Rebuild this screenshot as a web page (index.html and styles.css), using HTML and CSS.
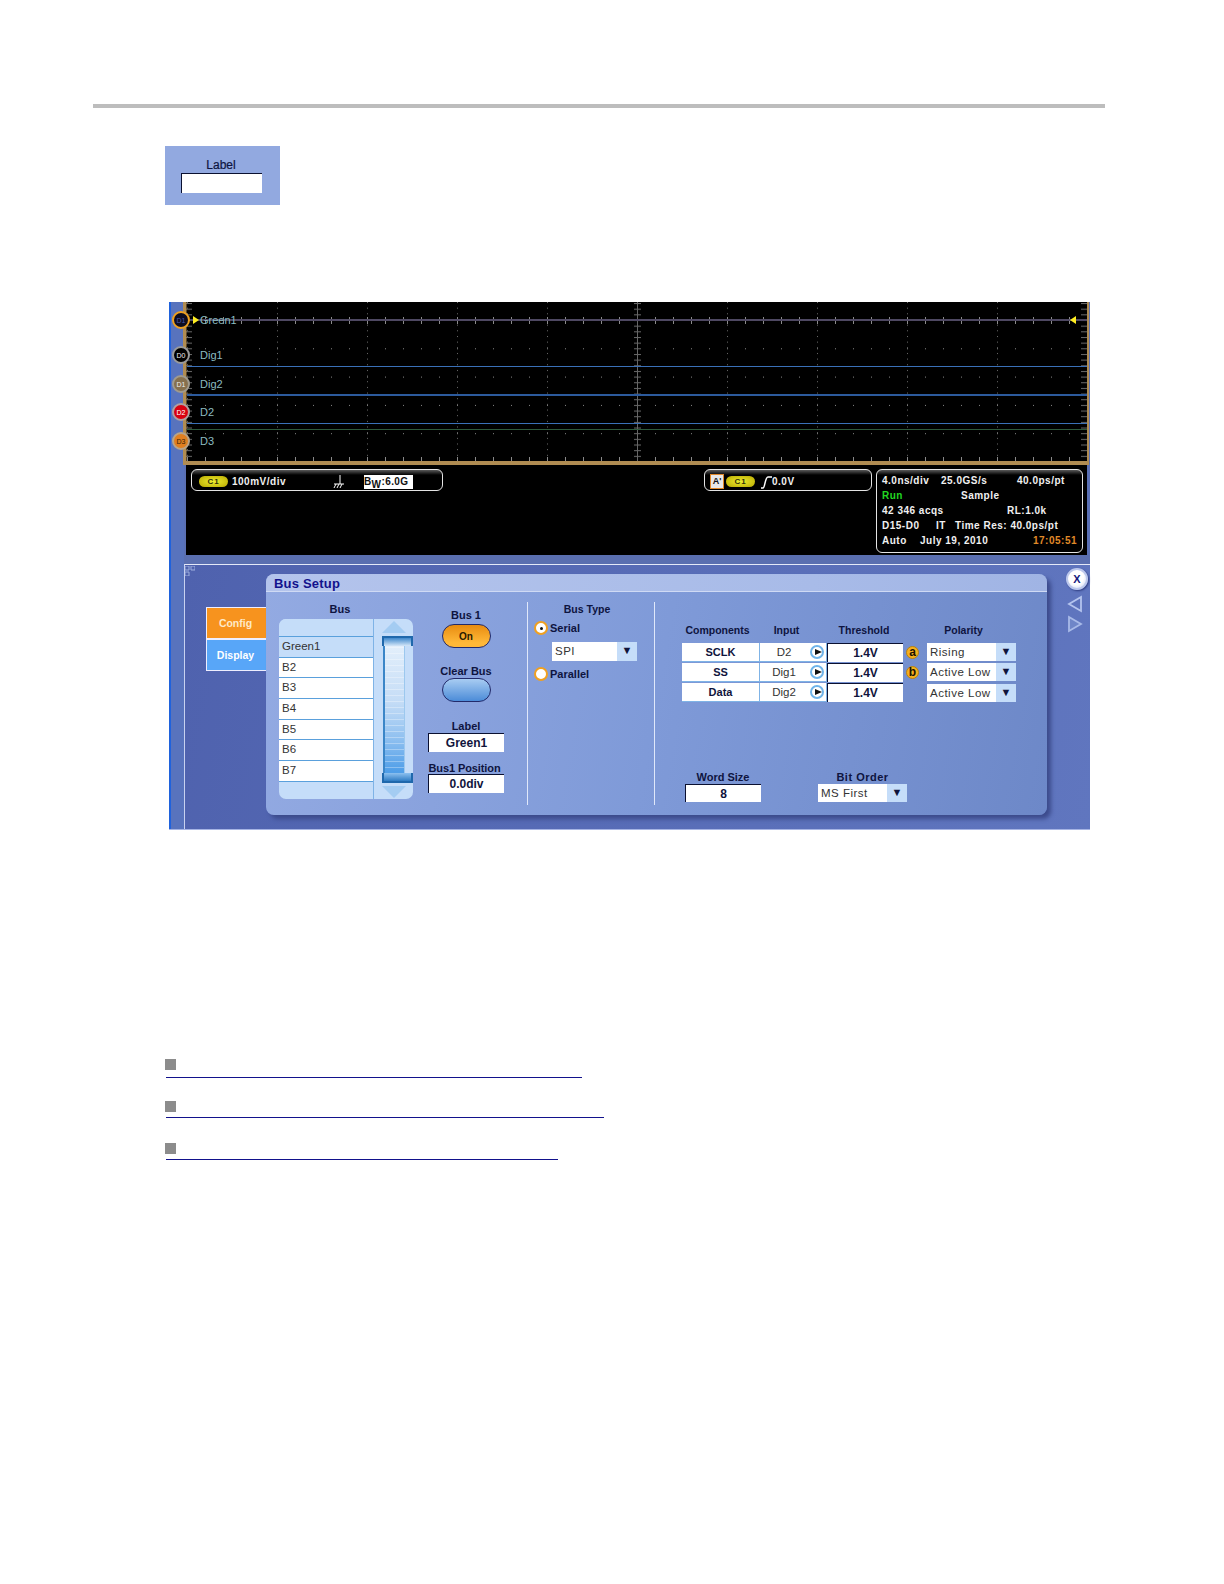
FILE: index.html
```html
<!DOCTYPE html>
<html lang="en">
<head>
<meta charset="utf-8">
<title>Bus Setup</title>
<link rel="stylesheet" href="styles.css">
</head>
<body>
<div class="rule"></div>

<div class="label-panel">
  <div class="cap">Label</div>
  <div class="entry label-entry"></div>
</div>

<div class="scope">
  <div class="edge"></div>
  <div class="main">
    <svg class="plot" width="907" height="163" viewBox="183 302 907 163">
      <defs>
        <pattern id="dots" x="187" y="320" width="18" height="28.3" patternUnits="userSpaceOnUse"><rect width="1" height="1" fill="#8a8a8a"/></pattern>
        <pattern id="vdots" x="187" y="302" width="90" height="5.66" patternUnits="userSpaceOnUse"><rect width="1" height="1" fill="#6e6e6e"/></pattern>
        <pattern id="ticks" x="187" y="0" width="18" height="10" patternUnits="userSpaceOnUse"><rect width="1" height="10" fill="#8a8a8a"/></pattern>
        <pattern id="lticks" x="0" y="320" width="10" height="5.66" patternUnits="userSpaceOnUse"><rect width="10" height="1" fill="#6a6a6a"/></pattern>
      </defs>
      <rect x="183" y="302" width="904" height="163" fill="#000"/>
      <rect x="187" y="320" width="900" height="141" fill="url(#dots)"/>
      <rect x="187" y="302" width="900" height="159" fill="url(#vdots)"/>
      <rect x="187" y="457" width="900" height="4" fill="url(#ticks)"/>
      <rect x="187" y="317" width="900" height="7" fill="url(#ticks)"/>
      <rect x="186" y="302" width="6" height="159" fill="url(#lticks)"/>
      <rect x="634" y="302" width="7" height="159" fill="url(#lticks)"/>
      <rect x="1081" y="302" width="6" height="159" fill="url(#lticks)"/>
      <rect x="637" y="302" width="1" height="159" fill="#666"/>
      <rect x="190" y="319" width="897" height="2" fill="#4e4862"/>
      <rect x="187" y="366" width="900" height="1" fill="#3a70b8"/>
      <rect x="187" y="394" width="900" height="2" fill="#2c5a9c"/>
      <rect x="187" y="423" width="900" height="1" fill="#3a70b8"/>
      <rect x="187" y="429" width="900" height="1" fill="#2e5a3c"/>
      <rect x="183" y="302" width="3.5" height="163" fill="#b08c52"/>
      <rect x="1087" y="302" width="2" height="163" fill="#b08c52"/>
      <rect x="183" y="461" width="906" height="4" fill="#b08c52"/>
      <polygon points="193,316 199,320 193,324" fill="#ffee22"/>
      <polygon points="1076,316 1070,320 1076,324" fill="#ffee22"/>
      <g class="trace-label">
        <text x="200" y="324">Green1</text>
        <text x="200" y="359">Dig1</text>
        <text x="200" y="388">Dig2</text>
        <text x="200" y="416">D2</text>
        <text x="200" y="445">D3</text>
      </g>
      <circle cx="181" cy="320" r="8" fill="#0c0c20" stroke="#eda020" stroke-width="2"/>
      <circle cx="181" cy="355" r="8" fill="#000" stroke="#9a9a9a" stroke-width="2"/>
      <circle cx="181" cy="384" r="8" fill="#86704e" stroke="#a09a8e" stroke-width="2"/>
      <circle cx="181" cy="412" r="8" fill="#d80010" stroke="#b0a0a0" stroke-width="2"/>
      <circle cx="181" cy="441" r="8" fill="#e07f20" stroke="#b8a488" stroke-width="2"/>
      <g class="chan">
        <text x="181" y="323" fill="#4a58a8">D1</text>
        <text x="181" y="358" fill="#eee">D0</text>
        <text x="181" y="387" fill="#eee">D1</text>
        <text x="181" y="415" fill="#fff">D2</text>
        <text x="181" y="444" fill="#33220a">D3</text>
      </g>
    </svg>

    <div class="readouts">
      <div class="ro-top">
        <div class="ro-box ch-box">
          <span class="pill">C1</span>
          <span class="ro-text">100mV/div</span>
          <svg class="ground" width="12" height="14" viewBox="0 0 12 14"><path d="M7 0V9M1 9H11M3 9L1 13M6 9L4 13M9 9L7 13" fill="none" stroke="#fff" stroke-width="1"/></svg>
          <span class="bw">B<sub>W</sub>:6.0G</span>
        </div>
        <div class="ro-box trig-box">
          <span class="a-box">A'</span>
          <span class="pill">C1</span>
          <svg class="slope" width="11" height="14" viewBox="0 0 11 14"><path d="M0 13H2C4 13 4 2 7 2H11" fill="none" stroke="#fff" stroke-width="1.5"/></svg>
          <span class="ro-text">0.0V</span>
        </div>
      </div>
      <div class="ro-box time-box">
        <div class="trow"><span class="t1">4.0ns/div</span><span class="t2">25.0GS/s</span><span class="t3">40.0ps/pt</span></div>
        <div class="trow"><span class="t1 green">Run</span><span class="t2b">Sample</span></div>
        <div class="trow"><span class="t1">42 346 acqs</span><span class="t3b">RL:1.0k</span></div>
        <div class="trow"><span class="t1c">D15-D0</span><span class="t2c">IT</span><span>Time Res: 40.0ps/pt</span></div>
        <div class="trow"><span class="t1d">Auto</span><span class="t2d">July 19, 2010</span><span class="orange">17:05:51</span></div>
      </div>
    </div>

    <div class="lower">
      <div class="frame">
        <svg class="grip" width="10" height="10" viewBox="0 0 10 10"><path d="M0 0H4V4H0ZM6 0H10V4H6ZM0 6H4V10H0Z" fill="none" stroke="#9fb0de" stroke-width="1"/></svg>
        <div class="tabs">
          <div class="tab tab-config">Config</div>
          <div class="tab tab-display">Display</div>
        </div>
        <div class="dialog">
          <div class="title">Bus Setup</div>
          <div class="body">
            <div class="col-bus">
              <div class="cap">Bus</div>
              <div class="listbox">
                <div class="list">
                  <div class="row blank"></div>
                  <div class="row sel">Green1</div>
                  <div class="row">B2</div>
                  <div class="row">B3</div>
                  <div class="row">B4</div>
                  <div class="row">B5</div>
                  <div class="row">B6</div>
                  <div class="row">B7</div>
                </div>
                <div class="scroll">
                  <div class="tri-up"></div>
                  <div class="thumb"></div>
                  <div class="tri-down"></div>
                </div>
              </div>
            </div>

            <div class="col-on">
              <div class="cap">Bus 1</div>
              <div class="oval oval-on">On</div>
              <div class="cap cap-clear">Clear Bus</div>
              <div class="oval oval-clear"></div>
              <div class="cap cap-label">Label</div>
              <div class="entry entry-bold">Green1</div>
              <div class="cap cap-pos">Bus1 Position</div>
              <div class="entry entry-bold">0.0div</div>
            </div>

            <div class="col-type">
              <div class="cap">Bus Type</div>
              <div class="radio-row radio-first"><span class="radio on"></span><span class="cap">Serial</span></div>
              <div class="select select-spi"><span class="sel-val">SPI</span><span class="sel-btn">▼</span></div>
              <div class="radio-row"><span class="radio"></span><span class="cap">Parallel</span></div>
            </div>

            <div class="col-comp">
              <div class="comp-grid">
                <div class="cap hd hd-comp">Components</div>
                <div class="cap hd hd-in">Input</div>
                <div class="cap hd hd-thr">Threshold</div>
                <div></div>
                <div class="cap hd hd-pol">Polarity</div>

                <div class="cell strong">SCLK</div>
                <div class="cell in">D2<span class="play"></span></div>
                <div class="entry thr">1.4V</div>
                <div class="badge">a</div>
                <div class="select"><span class="sel-val">Rising</span><span class="sel-btn">▼</span></div>

                <div class="cell strong">SS</div>
                <div class="cell in">Dig1<span class="play"></span></div>
                <div class="entry thr">1.4V</div>
                <div class="badge">b</div>
                <div class="select"><span class="sel-val">Active Low</span><span class="sel-btn">▼</span></div>

                <div class="cell strong">Data</div>
                <div class="cell in">Dig2<span class="play"></span></div>
                <div class="entry thr">1.4V</div>
                <div></div>
                <div class="select select-low"><span class="sel-val">Active Low</span><span class="sel-btn">▼</span></div>
              </div>
              <div class="comp-bottom">
                <div class="word">
                  <div class="cap">Word Size</div>
                  <div class="entry entry-bold entry-word">8</div>
                </div>
                <div class="order">
                  <div class="cap">Bit Order</div>
                  <div class="select"><span class="sel-val">MS First</span><span class="sel-btn">▼</span></div>
                </div>
              </div>
            </div>
          </div>
        </div>
        <div class="nav">
          <div class="close">X</div>
          <svg class="nav-left" width="16" height="18" viewBox="0 0 16 18"><polygon points="14,2 2,9 14,16" fill="#5c72bc" stroke="#b4c4ee" stroke-width="1.8"/></svg>
          <svg class="nav-right" width="16" height="18" viewBox="0 0 16 18"><polygon points="2,2 14,9 2,16" fill="#6f86c8" stroke="#a8bae8" stroke-width="1.8"/></svg>
        </div>
      </div>
    </div>
  </div>
</div>

<ul class="links">
  <li><span class="sq"></span><span class="ln ln1"></span></li>
  <li><span class="sq"></span><span class="ln ln2"></span></li>
  <li><span class="sq"></span><span class="ln ln3"></span></li>
</ul>
</body>
</html>
```
FILE: styles.css
```css
* { box-sizing: border-box; }
html, body { margin: 0; padding: 0; background: #fff; }
body { width: 1224px; height: 1584px; overflow: hidden; font-family: "Liberation Sans", Arial, sans-serif; color: #10143c; }

.rule { margin: 104px 0 0 93px; width: 1012px; height: 4px; background: #bdbdbd; }

.label-panel { margin: 38px 0 0 165px; width: 115px; height: 59px; background: #92a9e0; padding: 12px 3px 0 0; display: flex; flex-direction: column; align-items: center; }
.cap { font-size: 11px; font-weight: 700; line-height: 13px; color: #0e1440; text-align: center; white-space: nowrap; }
.label-panel .cap { font-size: 12px; font-weight: 400; -webkit-text-stroke: 0.2px #0e1440; line-height: 14px; }
.entry { background: #fff; border-top: 1px solid #0a1030; border-left: 1px solid #0a1030; display: flex; align-items: center; justify-content: center; color: #10143c; }
.label-entry { width: 81px; height: 20px; margin-top: 1px; }

.scope { margin: 97px 0 0 169px; width: 921px; height: 528px; display: flex; background: #5a70b4; border-bottom: 1px solid #a6b4e4; }
.edge { width: 15px; flex: none; background: #5873bd; border-left: 2px solid #1f62dc; }
.main { position: relative; width: 906px; display: flex; flex-direction: column; }

.plot { display: block; margin-left: -1px; overflow: visible; flex: none; }
.trace-label text { font-size: 11px; fill: #8cbcc0; }
.chan text { font-size: 7px; text-anchor: middle; }

.readouts { margin: 0 3px 0 2px; height: 90px; background: #000; display: flex; flex: none; padding: 4px 4px 2px 5px; gap: 4px; font-size: 10px; font-weight: 700; color: #f0f0f0; letter-spacing: 0.5px; }
.ro-top { display: flex; width: 681px; align-items: flex-start; justify-content: space-between; }
.ro-box { border: 1px solid #e4e4e4; border-radius: 6px; background: linear-gradient(#5a5a5a, #000 5px); }
.ch-box, .trig-box { height: 22px; display: flex; align-items: center; padding-top: 3px; }
.ch-box { width: 252px; padding-left: 7px; }
.trig-box { width: 168px; padding-left: 5px; }
.pill { width: 29px; height: 11px; border-radius: 6px; background: radial-gradient(ellipse at center, #eeee30, #b8a800); color: #30300a; font-size: 8px; line-height: 11px; text-align: center; letter-spacing: 1px; flex: none; }
.ro-text { margin-left: 4px; }
.ground { margin-left: 47px; flex: none; }
.bw { margin-left: 19px; width: 49px; height: 14px; background: #fff; color: #101010; line-height: 14px; font-size: 10px; letter-spacing: 0.4px; white-space: nowrap; }
.bw sub { font-size: 10px; line-height: 0; vertical-align: -3px; }
.a-box { width: 14px; height: 15px; border: 1px solid #e0882a; background: #e8e8e8; color: #111; line-height: 13px; text-align: center; font-size: 9px; letter-spacing: 0; margin-right: 2px; flex: none; }
.slope { margin-left: 6px; flex: none; }
.trig-box .ro-text { margin-left: 0; }
.time-box { width: 207px; height: 84px; padding: 3px 0 0 5px; }
.trow { height: 15px; line-height: 15px; display: flex; white-space: nowrap; }
.t1 { width: 59px; }
.t2 { width: 76px; }
.t2b { margin-left: 20px; }
.t3b { margin-left: 7px; }
.trow .t1:first-child + .t3b { margin-left: 66px; }
.t1c { width: 54px; }
.t2c { width: 19px; }
.t1d { width: 38px; }
.t2d { width: 113px; }
.green { color: #22d822; }
.orange { color: #e08a28; }

.lower { height: 274px; padding-top: 9px; flex: none; background: #5a6fb0; }
.frame { position: relative; height: 265px; border-top: 1px solid #e4e9f8; border-left: 1px solid #c8d2f0; display: flex; background: linear-gradient(100deg, #4f62ae, #6076bf); }
.grip { position: absolute; left: 0; top: 1px; }

.tabs { margin: 42px 0 0 21px; width: 60px; flex: none; }
.tab { height: 32px; color: #fff; font-size: 10.5px; font-weight: 700; display: flex; align-items: center; justify-content: center; border: 1px solid #eef; border-right: 0; padding-right: 2px; }
.tab-config { background: #f7931e; color: #ffe9c8; }
.tab-display { background: #58a6f8; }

.dialog { margin-top: 9px; width: 781px; height: 241px; flex: none; border-radius: 8px; background: linear-gradient(100deg, #93aae2, #7f9ad8 50%, #6d88c8); box-shadow: 4px 4px 4px #3c4b8c; display: flex; flex-direction: column; }
.title { height: 18px; padding-left: 8px; font-size: 13px; font-weight: 700; line-height: 20px; color: #12128c; background: linear-gradient(90deg, #b4c4ec, #a8bbe8 70%, #a0b4e4); border-bottom: 1px solid #cfdaf4; border-radius: 8px 8px 0 0; letter-spacing: 0.2px; flex: none; }
.body { display: flex; flex: 1; min-height: 0; }

.col-bus { margin: 11px 0 0 13px; width: 134px; flex: none; }
.col-bus .cap { width: 122px; line-height: 13px; font-size: 11px; }
.listbox { margin-top: 3px; width: 134px; height: 180px; display: flex; background: #c5ddf9; border-radius: 7px; overflow: hidden; }
.list { width: 95px; flex: none; border-right: 1px solid #7fb3e6; }
.row { height: 20.7px; padding-left: 3px; background: #fff; border-bottom: 1px solid #5aa0dc; font-size: 11.5px; line-height: 19px; color: #333; }
.row.blank { height: 18px; background: #c5ddf9; border-bottom: 1px solid #5aa0dc; }
.row.sel { background: #c5ddf9; }
.scroll { flex: 1; display: flex; flex-direction: column; align-items: center; padding-top: 2px; }
.tri-up { width: 0; height: 0; border-left: 12px solid transparent; border-right: 12px solid transparent; border-bottom: 12px solid #a4ccf2; flex: none; }
.tri-down { width: 0; height: 0; border-left: 12px solid transparent; border-right: 12px solid transparent; border-top: 12px solid #a4ccf2; margin-top: 3px; flex: none; }
.thumb { position: relative; margin-top: 3px; width: 22px; height: 147px; flex: none; border-left: 2px solid #3b86c8; border-right: 1px solid #9cc8ee; background: repeating-linear-gradient(#0000 0 5px, #ffffff50 5px 6px), linear-gradient(#e8f2fc, #c4dcf6 45%, #8fc0f0 70%, #4f9ee8 92%); }
.thumb::before, .thumb::after { content: ""; position: absolute; left: -3px; width: 27px; height: 8px; border: 2px solid #1f68ac; }
.thumb::before { top: 0; background: linear-gradient(#3f88cc, #d4e6f8); border-bottom: 0; }
.thumb::after { bottom: 0; background: linear-gradient(#8cc0f0, #2f7cc4); border-top: 0; }

.col-on { margin-left: 14px; width: 78px; flex: none; display: flex; flex-direction: column; align-items: center; padding-top: 17px; }
.oval { width: 49px; height: 24px; border-radius: 12px; border: 1px solid #222a6a; flex: none; }
.oval-on { margin-top: 2px; background: linear-gradient(#e88c10, #ffb838 80%); color: #2a1a00; font-size: 10px; font-weight: 700; text-align: center; line-height: 24px; }
.oval-clear { margin-top: 0; background: linear-gradient(#a8ccf2, #4c8cd8); }
.cap-clear { margin-top: 17px; }
.cap-label { margin-top: 18px; }
.col-on .entry { width: 76px; height: 19px; }
.entry-bold { font-size: 12px; font-weight: 700; }
.cap-pos { margin-top: 10px; margin-bottom: -1px; letter-spacing: -0.1px; padding-right: 3px; }

.col-type { margin-left: 22px; width: 128px; flex: none; border-left: 1px solid #e0e8fa; margin-top: 10px; height: 203px; padding-top: 1px; border-right: 1px solid #e0e8fa; }
.col-type > .cap { width: 118px; font-size: 10.5px; }
.radio-row { display: flex; align-items: center; margin-left: 6px; gap: 2px; height: 14px; }
.radio-first { margin-top: 5px; }
.radio { width: 14px; height: 14px; border-radius: 50%; background: #fff; border: 2px solid #f0a020; position: relative; flex: none; }
.radio.on::after { content: ""; position: absolute; left: 4px; top: 4px; width: 3px; height: 3px; border-radius: 50%; background: #111; }
.select { display: flex; height: 18px; background: #fff; color: #333; font-size: 11.5px; }
.sel-val { flex: 1; padding-left: 3px; line-height: 18px; white-space: nowrap; letter-spacing: 0.5px; }
.sel-btn { width: 20px; flex: none; background: #c5ddf9; color: #10143c; font-size: 11px; line-height: 17px; text-align: center; }
.select-spi { width: 85px; height: 19px; margin: 7px 0 6px 24px; }
.select-low { margin-top: 1px; }

.col-comp { flex: 1; padding: 32px 0 0 27px; }
.comp-grid { display: grid; grid-template-columns: 78px 67px 76px 24px 89px; grid-template-rows: 18px 19.5px 19.5px 19.5px; row-gap: 0.5px; }
.comp-grid .hd { line-height: 13px; align-self: start; font-size: 10.5px; }
.hd-comp { padding-right: 7px; }
.hd-in { padding-right: 14px; }
.hd-thr { padding-right: 2px; }
.hd-pol { padding-right: 16px; }
.cell { background: #fff; font-size: 11px; display: flex; align-items: center; justify-content: center; color: #222; border-right: 1px solid #7fb3e6; border-bottom: 1px solid #7fb3e6; }
.strong { font-weight: 700; color: #10143c; }
.in { position: relative; padding-right: 18px; font-size: 11.5px; color: #333; }
.play { position: absolute; right: 2px; top: 2.5px; width: 14px; height: 14px; border-radius: 50%; border: 2px solid #6fb4ea; background: #fff; }
.play::after { content: ""; position: absolute; left: 3px; top: 1.5px; border-left: 7px solid #111; border-top: 3.5px solid transparent; border-bottom: 3.5px solid transparent; }
.thr { font-size: 12px; font-weight: 700; }
.badge { margin-left: 3px; width: 13px; height: 13px; align-self: center; border-radius: 50%; background: #f5b01e; border: 1px solid #b8820e; color: #1c1200; font-size: 12px; font-weight: 700; line-height: 11px; text-align: center; }
.comp-bottom { margin-top: 69px; display: flex; }
.word { width: 76px; margin-left: 3px; }
.entry-word { height: 18px; margin-top: 0; width: 76px; }
.order { margin-left: 57px; width: 89px; }
.order .cap { margin-bottom: 0; letter-spacing: 0.5px; }

.nav { margin-left: 18px; margin-top: 3px; width: 24px; display: flex; flex-direction: column; align-items: center; }
.close { width: 22px; height: 22px; border-radius: 50%; background: radial-gradient(circle at 45% 40%, #fff 50%, #c4d0f0); border: 2px solid #bcc8ec; box-shadow: 1px 1px 2px #2e3c80; color: #16187c; font-size: 11px; font-weight: 700; text-align: center; line-height: 18px; }
.nav-left { margin: 5px 4px 0 0; }
.nav-right { margin: 2px 4px 0 0; }

.links { list-style: none; margin: 229px 0 0 165px; padding: 0; }
.links li { height: 42px; }
.sq { display: block; width: 11px; height: 11px; background: #8c8c8c; }
.ln { display: block; margin-left: 1px; height: 1.2px; background: #12128c; }
.ln1 { width: 416px; margin-top: 6.5px; }
.ln2 { width: 438px; margin-top: 5px; }
.ln3 { width: 392px; margin-top: 4.5px; }
```
